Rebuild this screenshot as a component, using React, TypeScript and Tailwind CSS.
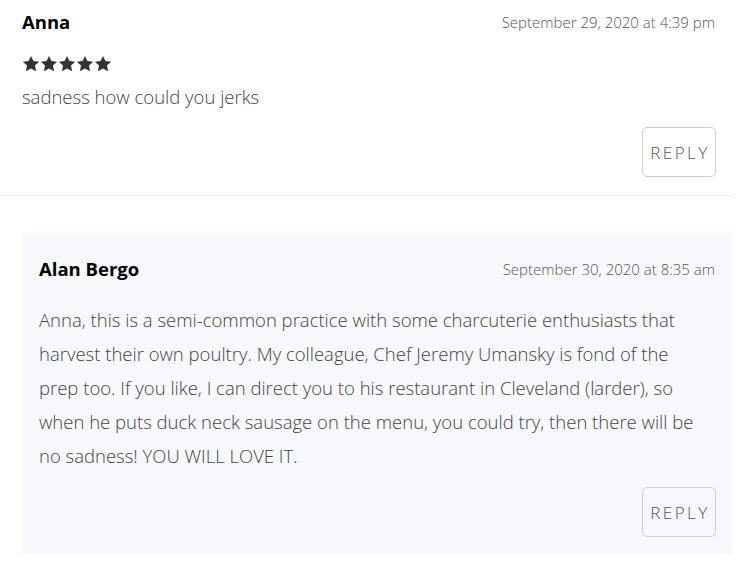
import React from 'react';

const FONT = { fontFamily: '"Open Sans", "Noto Sans", Arial, sans-serif' };

function Star() {
  return (
    <svg viewBox="0 0 24 24" className="w-[18px] h-[18px]" fill="#333">
      <path d="M12 1.2l3.3 6.8 7.6.9-5.6 5.2 1.5 7.5L12 17.9l-6.8 3.7 1.5-7.5L1.1 8.9l7.6-.9z" />
    </svg>
  );
}

function ReplyButton() {
  return (
    <button className="w-[74px] h-[50px] border border-[#cfcfcf] rounded-[5px] text-[17px] font-light tracking-[2.5px] text-[#555] pl-[2px] pt-[1px]">
      REPLY
    </button>
  );
}

export default function App() {
  return (
    <div className="w-[742px] bg-white" style={FONT}>
      {/* Anna's comment */}
      <div className="w-[733px] border-b border-[#efefef] pl-[22px] pr-[17px] pt-[8px] pb-[18px]">
        <div className="flex items-center justify-between">
          <span className="text-[18.5px] font-bold text-black leading-[28px]">Anna</span>
          <span className="text-[15px] font-light text-[#555] pr-[1px]">September 29, 2020 at 4:39 pm</span>
        </div>
        <div className="flex mt-[19px]">
          <Star />
          <Star />
          <Star />
          <Star />
          <Star />
        </div>
        <p className="text-[18.5px] font-light text-[#444] leading-[28px] mt-[10px]">sadness how could you jerks</p>
        <div className="flex justify-end mt-[16px]">
          <ReplyButton />
        </div>
      </div>

      {/* Reply */}
      <div className="ml-[22px] w-[711px] mt-[37px] bg-[#f7f8fb] pl-[17px] pr-[17px] pt-[22px] pb-[17px]">
        <div className="flex items-center justify-between">
          <span className="text-[18.5px] font-bold text-black leading-[28px]">Alan Bergo</span>
          <span className="text-[15px] font-light text-[#555] pr-[1px]">September 30, 2020 at 8:35 am</span>
        </div>
        <p className="text-[18.5px] font-light text-[#444] leading-[34px] mt-[20px]">
          Anna, this is a semi-common practice with some charcuterie enthusiasts that
          <br />
          harvest their own poultry. My colleague, Chef Jeremy Umansky is fond of the
          <br />
          prep too. If you like, I can direct you to his restaurant in Cleveland (larder), so
          <br />
          when he puts duck neck sausage on the menu, you could try, then there will be
          <br />
          no sadness! YOU WILL LOVE IT.
        </p>
        <div className="flex justify-end mt-[14px]">
          <ReplyButton />
        </div>
      </div>
    </div>
  );
}
